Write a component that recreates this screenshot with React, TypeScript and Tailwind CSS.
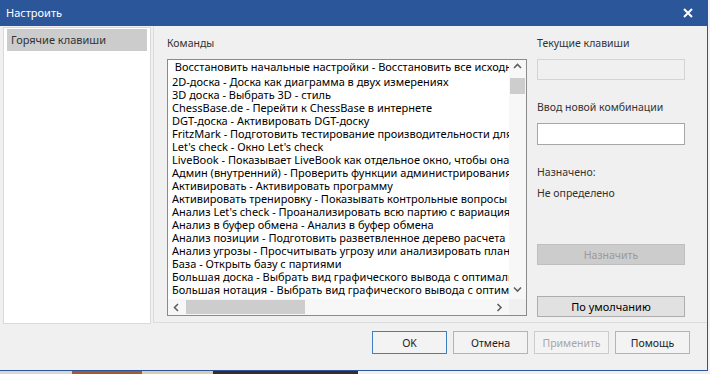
import React from "react";

const COMMANDS = [
  " Восстановить начальные настройки - Восстановить все исходные настройки",
  "2D-доска - Доска как диаграмма в двух измерениях",
  "3D доска - Выбрать 3D - стиль",
  "ChessBase.de - Перейти к ChessBase в интернете",
  "DGT-доска - Активировать DGT-доску",
  "FritzMark - Подготовить тестирование производительности для компьютера",
  "Let's check - Окно Let's check",
  "LiveBook - Показывает LiveBook как отдельное окно, чтобы она была видна",
  "Админ (внутренний) - Проверить функции администрирования",
  "Активировать - Активировать программу",
  "Активировать тренировку - Показывать контрольные вопросы",
  "Анализ Let's check - Проанализировать всю партию с вариациями",
  "Анализ в буфер обмена - Анализ в буфер обмена",
  "Анализ позиции - Подготовить разветвленное дерево расчета",
  "Анализ угрозы - Просчитывать угрозу или анализировать план",
  "База - Открыть базу с партиями",
  "Большая доска - Выбрать вид графического вывода с оптимальным",
  "Большая нотация - Выбрать вид графического вывода с оптимальной",
];

// tiny chevron used by the scrollbar arrows
function Chevron({ dir }: { dir: "up" | "down" | "left" | "right" }) {
  const d = {
    up: "M1 5 4.5 1.5 8 5",
    down: "M1 1.5 4.5 5 8 1.5",
    left: "M5 1 1.5 4.5 5 8",
    right: "M1.5 1 5 4.5 1.5 8",
  }[dir];
  return (
    <svg width="9" height="9" viewBox="0 0 9 9" fill="none" stroke="#606060" strokeWidth="1.6">
      <path d={d} />
    </svg>
  );
}

function Btn({ label, primary, disabled }: { label: string; primary?: boolean; disabled?: boolean }) {
  return (
    <button
      className={
        "w-[75px] h-[23px] flex items-center justify-center border bg-[#f3f3f3] text-[10.5px] " +
        (primary ? "border-[#3d7fc0] text-[#222]" : disabled ? "border-[#cccccc] text-[#a6a6a6]" : "border-[#b4b4b4] text-[#222]")
      }
    >
      {label}
    </button>
  );
}

export default function App() {
  return (
    <div className="w-[710px] h-[374px] flex flex-col overflow-hidden bg-white font-['Noto_Sans',sans-serif] text-[11px] leading-[16px] text-[#1a1a1a]">
      <div className="flex h-[371px]">
        <div className="w-[708px] flex flex-col bg-[#f0f0f0] border-r border-b border-[#2b579a]">
          {/* title bar */}
          <div className="h-[26px] shrink-0 bg-[#2b579a] flex items-center justify-between pl-[6px] pr-[14px] text-white text-[11px]">
            <span>Настроить</span>
            <svg width="10" height="10" viewBox="0 0 10 10" stroke="white" strokeWidth="2">
              <path d="M1 1 9 9M9 1 1 9" />
            </svg>
          </div>

          <div className="flex h-[298px] shrink-0">
            {/* left tree */}
            <div className="ml-[3px] mt-[1px] w-[148px] h-[297px] bg-white border border-[#d9d9d9] pt-[1px] px-[3px]">
              <div className="h-[22px] bg-[#cccccc] flex items-center px-[4px] text-[#333]">Горячие клавиши</div>
            </div>

            {/* right group */}
            <div className="ml-[2px] flex-1 h-[297px] border-l border-b border-[#dcdcdc] flex pt-[9px] pl-[13px] text-[10.5px] text-[#333]">
              <div className="flex flex-col w-[360px]">
                <div className="h-[16px] mb-[8px]">Команды</div>
                <div className="h-[257px] border border-[#8a8a8a] bg-white flex flex-col">
                  <div className="flex h-[239px]">
                    <div className="flex-1 overflow-hidden pl-[4px] text-black text-[11px] leading-[13px]">
                      {COMMANDS.map((c, i) => (
                        <div key={c} className={"whitespace-pre " + (i === 0 ? "h-[15px]" : "h-[13px]")}>
                          {c}
                        </div>
                      ))}
                    </div>
                    <div className="w-[17px] flex flex-col items-center bg-[#f7f7f7]">
                      <div className="h-[13px] flex items-center justify-center pt-[2px]">
                        <Chevron dir="up" />
                      </div>
                      <div className="w-[15px] h-[16px] mt-[5px] bg-[#cdcdcd]" />
                      <div className="flex-1" />
                      <div className="h-[17px] flex items-center justify-center">
                        <Chevron dir="down" />
                      </div>
                    </div>
                  </div>
                  <div className="flex h-[16px]">
                    <div className="flex-1 flex items-center bg-[#f7f7f7]">
                      <div className="w-[18px] flex justify-center">
                        <Chevron dir="left" />
                      </div>
                      <div className="w-[119px] h-[14px] bg-[#cdcdcd]" />
                      <div className="flex-1" />
                      <div className="w-[18px] flex justify-center">
                        <Chevron dir="right" />
                      </div>
                    </div>
                    <div className="w-[17px] bg-[#f0f0f0]" />
                  </div>
                </div>
              </div>

              <div className="ml-[10px] w-[148px] flex flex-col">
                <div className="h-[16px] mb-[8px]">Текущие клавиши</div>
                <div className="h-[21px] border border-[#d4d4d4] bg-[#f0f0f0]" />
                <div className="h-[16px] mt-[19px] mb-[8px]">Ввод новой комбинации</div>
                <div className="h-[22px] border border-[#a6a6a6] bg-white" />
                <div className="h-[16px] mt-[19px]">Назначено:</div>
                <div className="h-[16px] mt-[5px]">Не определено</div>
                <div className="h-[21px] mt-[43px] border border-[#bfbfbf] bg-[#cccccc] flex items-center justify-center text-[#9a9a9a]">
                  Назначить
                </div>
                <div className="h-[21px] mt-[31px] border border-[#adadad] bg-[#e1e1e1] flex items-center justify-center text-black text-[11px]">
                  По умолчанию
                </div>
              </div>
            </div>
          </div>

          {/* dialog buttons */}
          <div className="flex justify-end gap-[6px] pr-[17px] pt-[7px]">
            <Btn label="OK" primary />
            <Btn label="Отмена" />
            <Btn label="Применить" disabled />
            <Btn label="Помощь" />
          </div>
        </div>
        <div className="flex-1 bg-[#f4f4f4]" />
      </div>

      {/* strip of the desktop behind the dialog */}
      <div className="flex h-[3px]">
        <div className="w-[72px] bg-[#d8d8d8]" />
        <div className="w-[70px] bg-[#a3593a]" />
        <div className="w-[71px] bg-[#d9cbb4]" />
        <div className="w-[145px] bg-[#3a2a2e]" />
        <div className="flex-1 bg-[#f0f0f0]" />
      </div>
    </div>
  );
}
